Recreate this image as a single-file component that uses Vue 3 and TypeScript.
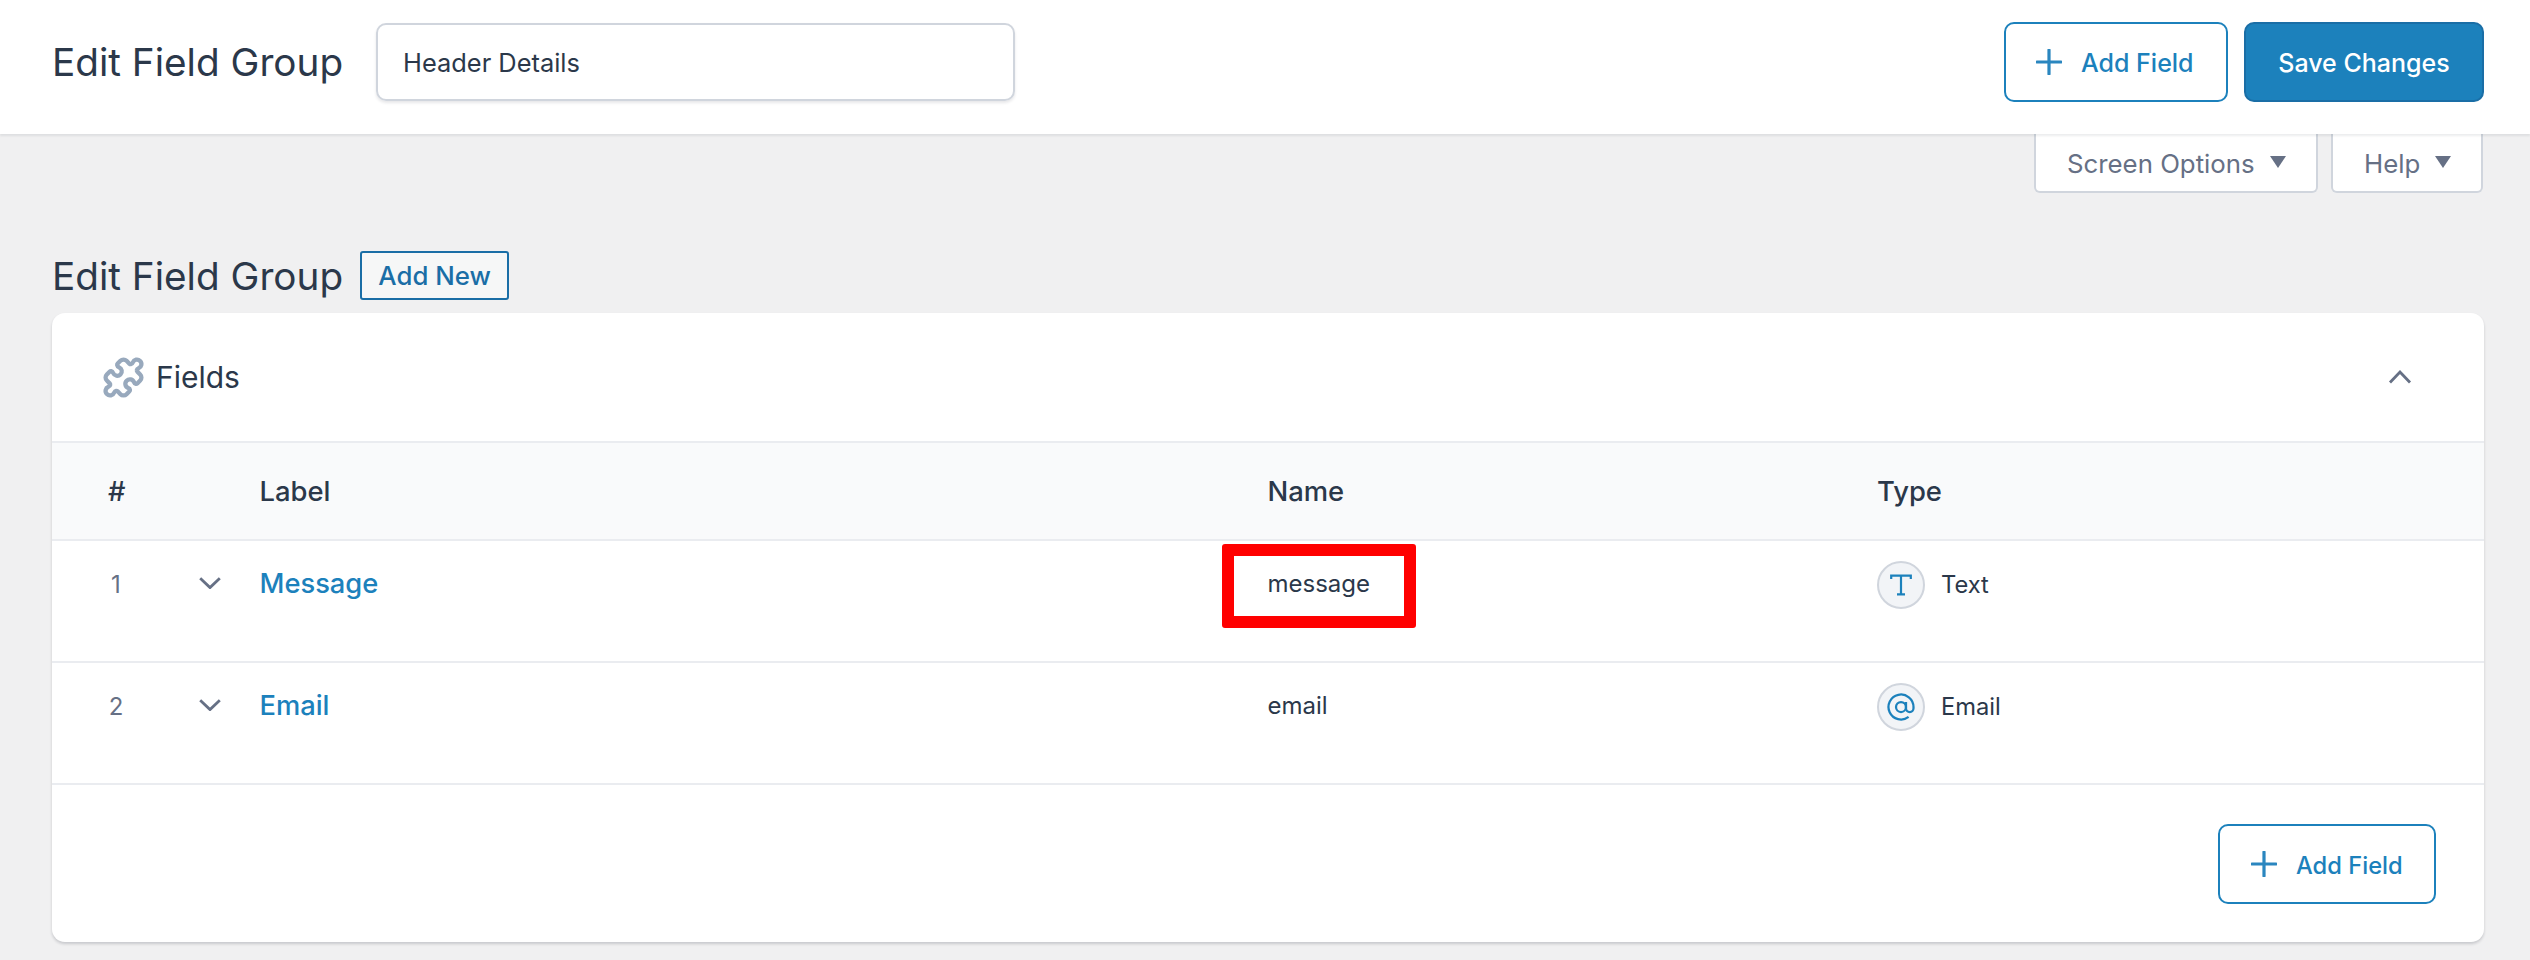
<script setup lang="ts">
interface FieldRow { n: number; label: string; name: string; type: string; icon: 'text' | 'email'; marked: boolean }
const rows: FieldRow[] = [
  { n: 1, label: 'Message', name: 'message', type: 'Text', icon: 'text', marked: true },
  { n: 2, label: 'Email', name: 'email', type: 'Email', icon: 'email', marked: false },
]
</script>

<template>
  <div class="page">
    <header class="topbar">
      <h1 class="title">Edit Field Group</h1>
      <div class="group-input">Header Details</div>
      <div class="top-actions">
        <button class="btn-outline">
          <svg class="plus" viewBox="0 0 26 26"><path d="M13 1v24M1 13h24" /></svg>
          <span>Add Field</span>
        </button>
        <button class="btn-save">Save Changes</button>
      </div>
    </header>

    <div class="meta-links">
      <div class="meta-tab screen">Screen Options<i class="arrow"></i></div>
      <div class="meta-tab help">Help<i class="arrow"></i></div>
    </div>

    <div class="heading">
      <h2 class="title">Edit Field Group</h2>
      <a class="add-new">Add New</a>
    </div>

    <section class="card">
      <div class="card-head">
        <svg class="puzzle" viewBox="0 0 24 24"><path d="M19.439 7.85c-.049.322.059.648.289.878l1.568 1.568c.47.47.706 1.087.706 1.704s-.235 1.233-.706 1.704l-1.611 1.611a.98.98 0 0 1-.837.276c-.47-.07-.802-.48-.968-.925a2.501 2.501 0 1 0-3.214 3.214c.446.166.855.497.925.968a.979.979 0 0 1-.276.837l-1.61 1.61a2.404 2.404 0 0 1-1.705.707 2.402 2.402 0 0 1-1.704-.706l-1.568-1.568a1.026 1.026 0 0 0-.877-.29c-.493.074-.84.504-1.02.968a2.5 2.5 0 1 1-3.237-3.237c.464-.18.894-.527.967-1.02a1.026 1.026 0 0 0-.289-.877l-1.568-1.568A2.402 2.402 0 0 1 1.998 12c0-.617.236-1.234.706-1.704L4.23 8.77c.24-.24.581-.353.917-.303.515.077.877.528 1.073 1.01a2.5 2.5 0 1 0 3.259-3.259c-.482-.196-.933-.558-1.01-1.073-.05-.336.062-.676.303-.917l1.525-1.525A2.402 2.402 0 0 1 12 1.998c.617 0 1.234.236 1.704.706l1.568 1.568c.23.23.556.338.877.29.493-.074.84-.504 1.02-.968a2.5 2.5 0 1 1 3.237 3.237c-.464.18-.894.527-.967 1.02Z" /></svg>
        <span class="card-title">Fields</span>
        <svg class="collapse" viewBox="0 0 24 14"><path d="M2 12.5 12 2l10 10.5" /></svg>
      </div>

      <div class="thead grid">
        <span class="num-head">#</span>
        <span></span>
        <span>Label</span>
        <span>Name</span>
        <span>Type</span>
      </div>

      <div v-for="row in rows" :key="row.n" class="trow grid">
        <span class="num">{{ row.n }}</span>
        <svg class="chev" viewBox="0 0 22 12"><path d="M1.2 1.2 11 10.6l9.8-9.4" /></svg>
        <a class="link">{{ row.label }}</a>
        <span class="name">
          {{ row.name }}
          <span v-if="row.marked" class="marker"></span>
        </span>
        <span class="type">
          <span class="type-icon">
            <svg v-if="row.icon === 'text'" class="t-glyph" viewBox="0 0 22 22"><path d="M1.2 5V1.6h19.6V5M11 1.6v18.8M7 20.4h8" /></svg>
            <svg v-else class="at-glyph" viewBox="0 0 24 24"><circle cx="12" cy="12" r="4" /><path d="M16 8v5a3 3 0 0 0 6 0v-1a10 10 0 1 0-3.92 7.94" /></svg>
          </span>
          {{ row.type }}
        </span>
      </div>

      <div class="card-foot">
        <button class="btn-outline small">
          <svg class="plus" viewBox="0 0 26 26"><path d="M13 1v24M1 13h24" /></svg>
          <span>Add Field</span>
        </button>
      </div>
    </section>
  </div>
</template>

<style>
html, body { margin: 0; background: #f0f0f1; }
</style>

<style scoped>
.page {
  width: 2530px;
  height: 960px;
  overflow: hidden;
  background: #f0f0f1;
  font-family: Inter, "Liberation Sans", sans-serif;
  color: #2b384a;
}
.topbar {
  height: 134px;
  box-sizing: border-box;
  display: flex;
  align-items: center;
  padding: 0 46px 11px 52px;
  background: #fff;
  box-shadow: 0 2px 2px rgba(16, 24, 40, 0.08);
  position: relative;
}
.title {
  margin: 0;
  font-size: 38.7px;
  font-weight: 400;
  line-height: 50px;
  color: #2b384a;
}
.group-input {
  margin-left: 33px;
  width: 639px;
  height: 78px;
  box-sizing: border-box;
  border: 2px solid #d0d5dd;
  border-radius: 10px;
  box-shadow: 0 2px 3px rgba(16, 24, 40, 0.1);
  padding: 2px 0 0 25px;
  display: flex;
  align-items: center;
  font-size: 25.4px;
  color: #2b384a;
}
.top-actions {
  margin-left: auto;
  display: flex;
  gap: 16px;
}
.btn-outline {
  display: flex;
  align-items: center;
  gap: 19px;
  height: 80px;
  width: 224px;
  box-sizing: border-box;
  padding: 0 0 0 30px;
  background: #fff;
  border: 2px solid #1c81bc;
  border-radius: 10px;
  color: #1c81bc;
  font: 500 25px Inter, sans-serif;
}
.btn-outline span { padding-top: 2px; }
.btn-outline.small {
  width: 218px;
  height: 80px;
  padding-left: 31px;
  font-size: 23.7px;
}
.plus { width: 26px; height: 26px; flex: none; }
.plus path { fill: none; stroke: #2a86bf; stroke-width: 3.2; stroke-linecap: round; }
.btn-save {
  width: 240px;
  height: 80px;
  box-sizing: border-box;
  padding-top: 4px;
  background: #1c81bc;
  border: 2px solid #1a6ea6;
  border-radius: 10px;
  color: #fff;
  font: 500 25px Inter, sans-serif;
}
.meta-links {
  display: flex;
  justify-content: flex-end;
  gap: 13px;
  padding-right: 47px;
}
.meta-tab {
  height: 59px;
  box-sizing: border-box;
  display: flex;
  align-items: center;
  padding-top: 2px;
  background: #fff;
  border: 2px solid #d0d5dd;
  border-top: 0;
  border-radius: 0 0 6px 6px;
  color: #667085;
  font-size: 25.8px;
}
.screen { width: 284px; padding-left: 31px; }
.help { width: 152px; padding-left: 31px; }
.arrow {
  width: 0;
  height: 0;
  margin: -4px 0 0 15px;
  border-left: 8px solid transparent;
  border-right: 8px solid transparent;
  border-top: 12px solid #667085;
}
.heading {
  display: flex;
  align-items: center;
  padding-left: 52px;
  margin-top: 57px;
  height: 50px;
}
.heading .title { padding-top: 2px; }
.add-new {
  margin-left: 17px;
  width: 149px;
  height: 49px;
  box-sizing: border-box;
  border: 2px solid #1a6ea6;
  border-radius: 3px;
  background: #f6f7f7;
  display: flex;
  align-items: center;
  justify-content: center;
  font-size: 25.8px;
  font-weight: 500;
  color: #1a6ea6;
}
.card {
  margin: 13px 46px 0 52px;
  background: #fff;
  border-radius: 13px;
  box-shadow: 0 2px 3px rgba(16, 24, 40, 0.18);
}
.card-head {
  height: 128px;
  display: flex;
  align-items: center;
  padding: 0 72px 0 50px;
}
.puzzle { width: 43px; height: 43px; flex: none; }
.puzzle path { fill: none; stroke: #98a9bd; stroke-width: 2.4; }
.card-title {
  margin-left: 11px;
  font-size: 30px;
  color: #2b384a;
}
.collapse { margin-left: auto; width: 24px; height: 14px; }
.collapse path, .chev path { fill: none; stroke: #667085; stroke-width: 2.8; }
.grid {
  display: grid;
  grid-template-columns: 16px 135.5px 1008px 609.5px 1fr;
  padding-left: 56px;
}
.thead {
  height: 95.5px;
  align-items: center;
  background: #f9fafb;
  border-top: 2px solid #eaecf0;
  border-bottom: 2px solid #eaecf0;
  font-size: 27.4px;
  font-weight: 500;
  color: #2b384a;
}
.num-head { text-align: center; }
.trow {
  height: 120px;
  border-bottom: 2px solid #eaecf0;
  box-sizing: content-box;
  font-size: 24px;
  align-items: start;
}
.num {
  margin-top: 29.5px;
  line-height: 30px;
  text-align: center;
  color: #667085;
  font-size: 24px;
}
.chev { width: 22px; height: 12px; margin: 36.5px 0 0 75px; }
.link {
  margin-top: 27.5px;
  line-height: 32px;
  font-size: 27.3px;
  font-weight: 500;
  color: #1c81bc;
}
.name {
  position: relative;
  margin-top: 28.5px;
  line-height: 30px;
}
.marker {
  position: absolute;
  left: -46px;
  top: -25px;
  width: 194px;
  height: 84px;
  box-sizing: border-box;
  border: 12px solid #ff0000;
  border-radius: 3px;
}
.type {
  display: flex;
  align-items: center;
  gap: 16px;
  margin-top: 20px;
  height: 48px;
  font-size: 23.7px;
}
.type-icon {
  width: 48px;
  height: 48px;
  box-sizing: border-box;
  border: 2px solid #d0d5dd;
  border-radius: 50%;
  background: #f2f4f7;
  display: flex;
  align-items: center;
  justify-content: center;
}
.type-icon .t-glyph { width: 22px; height: 22px; }
.type-icon .at-glyph { width: 30px; height: 30px; }
.type-icon path, .type-icon circle { fill: none; stroke: #1c81bc; stroke-width: 2.2; }
.type-icon .at-glyph path, .type-icon .at-glyph circle { stroke-width: 1.8; }
.card-foot {
  height: 157.5px;
  box-sizing: border-box;
  display: flex;
  justify-content: flex-end;
  padding: 39.5px 48px 0 0;
}
</style>
